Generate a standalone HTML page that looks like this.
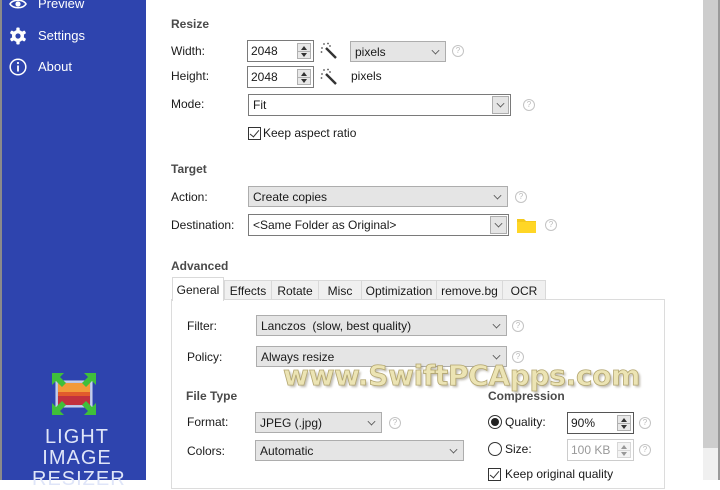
<!DOCTYPE html>
<html><head><meta charset="utf-8"><style>
*{box-sizing:border-box;margin:0;padding:0}
body{width:720px;height:480px;overflow:hidden;background:#fff;font-family:"Liberation Sans",sans-serif;font-size:12px;color:#1a1a1a;position:relative}
.a{position:absolute}
#side{left:0;top:0;width:146px;height:480px;background:#2e44ae;border-left:2px solid #8a8a8a}
.nav{position:absolute;left:36px;color:#fff;font-size:13px}
.h{position:absolute;font-weight:bold;color:#4a4a4a;font-size:12px}
.l{position:absolute;font-size:12px}
.sel{position:absolute;background:#e5e5e5;border:1px solid #adadad;height:21px;padding:3px 0 0 4px;font-size:12px}
.selw{position:absolute;background:#fff;border:1px solid #7a7a7a;height:22px;padding:3px 0 0 4px;font-size:12px}
.chev{position:absolute;right:6px;top:5px;width:7px;height:7px;border-right:1px solid #555;border-bottom:1px solid #555;transform:rotate(45deg) scale(.8)}
.btn{position:absolute;right:1px;top:1px;bottom:1px;width:17px;background:#e5e5e5;border:1px solid #adadad}
.btn .chev{right:4px;top:3px}
.help{position:absolute;width:12px;height:12px;border:1px solid #c4c4c4;border-radius:50%;color:#bbb;font-size:8px;text-align:center;line-height:10px}
.spin{position:absolute;background:#fff;border:1px solid #7a7a7a;height:22px;padding:3px 0 0 3px;font-size:12px}
.sb{position:absolute;right:2px;top:2px;width:14px;height:16px;background:#e8e8e8;border:1px solid #b0b0b0}
.sb:before{content:"";position:absolute;left:3px;top:2px;border:3px solid transparent;border-bottom:4px solid #333;border-top:0}
.sb:after{content:"";position:absolute;left:3px;top:9px;border:3px solid transparent;border-top:4px solid #333;border-bottom:0}
.sb i{position:absolute;left:0;right:0;top:7px;border-top:1px solid #b0b0b0}
.cb{position:absolute;width:13px;height:13px;border:1px solid #333;background:#fff}
.cb:after{content:"";position:absolute;left:3px;top:0px;width:4px;height:8px;border-right:1.5px solid #333;border-bottom:1.5px solid #333;transform:rotate(40deg)}
.tab{position:absolute;top:280px;height:20px;background:#f0f0f0;border:1px solid #d9d9d9;font-size:12px;text-align:center;padding-top:3px}
.wand{position:absolute;width:18px;height:18px}
.rad{position:absolute;width:14px;height:14px;border:1px solid #333;border-radius:50%;background:#fff}
</style></head><body>
<div id="side" class="a">
<svg class="a" style="left:7px;top:-3px" width="18" height="14" viewBox="0 0 18 14"><path d="M1 7C4 2 14 2 17 7C14 12 4 12 1 7Z" fill="none" stroke="#fff" stroke-width="1.6"/><circle cx="9" cy="7" r="2.6" fill="#fff"/></svg>
<div class="nav" style="top:-4px">Preview</div>
<svg class="a" style="left:7px;top:27px" width="18" height="18" viewBox="0 0 18 18"><g fill="#fff"><circle cx="9" cy="9" r="6"/><rect x="7.3" y="0.5" width="3.4" height="17" rx="1"/><rect x="7.3" y="0.5" width="3.4" height="17" rx="1" transform="rotate(60 9 9)"/><rect x="7.3" y="0.5" width="3.4" height="17" rx="1" transform="rotate(120 9 9)"/></g><circle cx="9" cy="9" r="2.6" fill="#2e44ae"/></svg>
<div class="nav" style="top:28px">Settings</div>
<svg class="a" style="left:7px;top:58px" width="18" height="18" viewBox="0 0 18 18"><circle cx="9" cy="9" r="7.8" fill="none" stroke="#fff" stroke-width="1.5"/><rect x="8.1" y="7.5" width="1.8" height="6" fill="#fff"/><circle cx="9" cy="5" r="1.1" fill="#fff"/></svg>
<div class="nav" style="top:59px">About</div>
<svg class="a" style="left:48px;top:371px" width="50" height="46" viewBox="0 0 50 46"><rect x="6" y="10" width="36" height="26" fill="#b9c4e6" stroke="#cfd8f0"/><rect x="8" y="12" width="32" height="22" fill="#e25a2c"/><rect x="8" y="12" width="32" height="9" fill="#f29a3a"/><rect x="8" y="25" width="32" height="9" fill="#c2303e"/><g fill="#3fbf3a"><path d="M2 2h12l-4 4 6 6-4 4-6-6-4 4z"/><path d="M46 2h-12l4 4-6 6 4 4 6-6 4 4z"/><path d="M2 44h12l-4-4 6-6-4-4-6 6-4-4z"/><path d="M46 44h-12l4-4-6-6 4-4 6 6 4-4z"/></g></svg>
<div class="a" style="left:30px;top:427px;width:90px;text-align:center;color:#dfe5f8;font-size:20px;line-height:21px;letter-spacing:1px;font-weight:300">LIGHT<br>IMAGE<br>RESIZER</div>
</div>

<div class="a" style="left:703px;top:0;width:15px;height:448px;background:#cdcdcd"></div>
<div class="a" style="left:703px;top:448px;width:15px;height:32px;background:#f0f0f0"></div>
<div class="a" style="left:718px;top:0;width:2px;height:480px;background:#9a9a9a"></div>

<div class="h" style="left:171px;top:17px">Resize</div>
<div class="l" style="left:171px;top:44px">Width:</div>
<div class="l" style="left:171px;top:69px">Height:</div>
<div class="l" style="left:171px;top:97px">Mode:</div>
<div class="spin" style="left:247px;top:40px;width:67px">2048<div class="sb"><i></i></div></div>
<div class="spin" style="left:247px;top:66px;width:67px">2048<div class="sb"><i></i></div></div>
<svg class="wand" style="left:320px;top:42px" viewBox="0 0 18 18"><path d="M6 6L16 16" stroke="#333" stroke-width="2.4"/><g fill="#555"><circle cx="4" cy="2" r=".9"/><circle cx="8" cy="1.5" r=".9"/><circle cx="2" cy="6" r=".9"/><circle cx="1.5" cy="10" r=".9"/><circle cx="10" cy="4" r=".9"/></g></svg>
<svg class="wand" style="left:320px;top:68px" viewBox="0 0 18 18"><path d="M6 6L16 16" stroke="#333" stroke-width="2.4"/><g fill="#555"><circle cx="4" cy="2" r=".9"/><circle cx="8" cy="1.5" r=".9"/><circle cx="2" cy="6" r=".9"/><circle cx="1.5" cy="10" r=".9"/><circle cx="10" cy="4" r=".9"/></g></svg>
<div class="sel" style="left:350px;top:41px;width:96px">pixels<div class="chev"></div></div>
<div class="help" style="left:452px;top:45px">?</div>
<div class="l" style="left:351px;top:69px">pixels</div>
<div class="selw" style="left:248px;top:94px;width:263px">Fit<div class="btn"><div class="chev"></div></div></div>
<div class="help" style="left:523px;top:99px">?</div>
<div class="cb" style="left:248px;top:127px"></div>
<div class="l" style="left:263px;top:126px">Keep aspect ratio</div>

<div class="h" style="left:171px;top:162px">Target</div>
<div class="l" style="left:171px;top:190px">Action:</div>
<div class="l" style="left:171px;top:218px">Destination:</div>
<div class="sel" style="left:248px;top:186px;width:260px">Create copies<div class="chev"></div></div>
<div class="help" style="left:515px;top:191px">?</div>
<div class="selw" style="left:248px;top:214px;width:261px">&lt;Same Folder as Original&gt;<div class="btn"><div class="chev"></div></div></div>
<svg class="a" style="left:517px;top:218px" width="19" height="15" viewBox="0 0 19 15"><path d="M0 1h7l2 2h10v12H0z" fill="#f4c91b"/><rect x="0" y="4" width="19" height="11" fill="#ffd626"/></svg>
<div class="help" style="left:545px;top:219px">?</div>

<div class="h" style="left:171px;top:259px">Advanced</div>
<div class="a" style="left:171px;top:299px;width:494px;height:190px;border:1px solid #dcdcdc;background:#fff"></div>
<div class="tab" style="left:224px;width:48px">Effects</div>
<div class="tab" style="left:271px;width:48px">Rotate</div>
<div class="tab" style="left:318px;width:44px">Misc</div>
<div class="tab" style="left:361px;width:76px">Optimization</div>
<div class="tab" style="left:436px;width:67px">remove.bg</div>
<div class="tab" style="left:502px;width:44px">OCR</div>
<div class="a" style="left:172px;top:277px;width:52px;height:24px;background:#fff;border:1px solid #d9d9d9;border-bottom:none;text-align:center;padding-top:5px">General</div>

<div class="l" style="left:187px;top:319px">Filter:</div>
<div class="l" style="left:187px;top:350px">Policy:</div>
<div class="sel" style="left:256px;top:315px;width:251px">Lanczos&nbsp; (slow, best quality)<div class="chev"></div></div>
<div class="help" style="left:512px;top:320px">?</div>
<div class="sel" style="left:256px;top:346px;width:251px">Always resize<div class="chev"></div></div>
<div class="help" style="left:512px;top:351px">?</div>

<div class="h" style="left:186px;top:389px">File Type</div>
<div class="l" style="left:187px;top:415px">Format:</div>
<div class="l" style="left:187px;top:444px">Colors:</div>
<div class="sel" style="left:255px;top:412px;width:127px">JPEG (.jpg)<div class="chev"></div></div>
<div class="help" style="left:389px;top:417px">?</div>
<div class="sel" style="left:255px;top:440px;width:209px">Automatic<div class="chev"></div></div>

<div class="h" style="left:488px;top:389px">Compression</div>
<div class="rad" style="left:488px;top:415px"><div class="a" style="left:2px;top:2px;width:8px;height:8px;border-radius:50%;background:#222"></div></div>
<div class="l" style="left:505px;top:415px">Quality:</div>
<div class="spin" style="left:567px;top:412px;width:67px;border-color:#555">90%<div class="sb"><i></i></div></div>
<div class="help" style="left:639px;top:417px">?</div>
<div class="rad" style="left:488px;top:442px"></div>
<div class="l" style="left:505px;top:442px">Size:</div>
<div class="spin" style="left:567px;top:439px;width:67px;border-color:#ccc;color:#999">100 KB<div class="sb" style="opacity:.5"><i></i></div></div>
<div class="help" style="left:639px;top:444px">?</div>
<div class="cb" style="left:488px;top:468px"></div>
<div class="l" style="left:505px;top:467px">Keep original quality</div>

<div class="a" style="left:283px;top:359px;font-family:'DejaVu Sans',sans-serif;font-weight:bold;font-size:28px;letter-spacing:-0.3px;color:#ece4b4;-webkit-text-stroke:0.8px #b3a670;text-shadow:2px 2px 2px rgba(80,70,40,.35);white-space:nowrap">www.SwiftPCApps.com</div>
</body></html>
